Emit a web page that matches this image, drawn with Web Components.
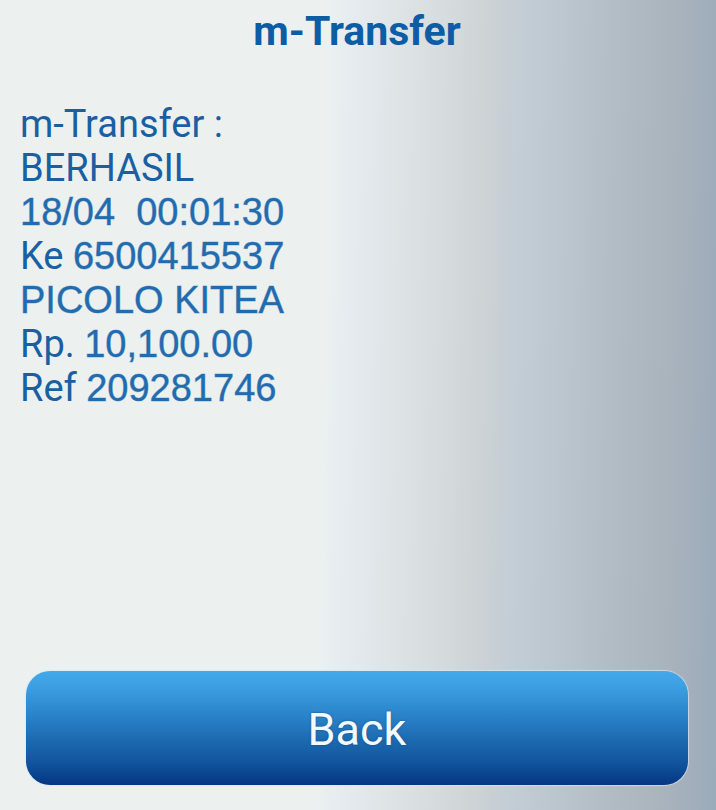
<!DOCTYPE html>
<html lang="id">
<head>
<meta charset="utf-8">
<meta name="viewport" content="width=device-width, initial-scale=1">
<title>m-Transfer</title>
<style>
  html, body { margin: 0; min-height: 100%; }
</style>
</head>
<body>
<transfer-screen>
  <screen-title slot="title">m-Transfer</screen-title>
  <receipt-line>m-Transfer :</receipt-line>
  <receipt-line>BERHASIL</receipt-line>
  <receipt-line><span slot="value">18/04&nbsp; 00:01:30</span></receipt-line>
  <receipt-line>Ke <span slot="value">6500415537</span></receipt-line>
  <receipt-line><span slot="value">PICOLO KITEA</span></receipt-line>
  <receipt-line>Rp. <span slot="value">10,100.00</span></receipt-line>
  <receipt-line>Ref <span slot="value">209281746</span></receipt-line>
  <action-button slot="action">Back</action-button>
</transfer-screen>
<script>
class BaseElement extends HTMLElement {
  constructor() {
    super();
    this.attachShadow({ mode: 'open' }).innerHTML = this.constructor.markup;
  }
}

class TransferScreen extends BaseElement {
  static markup = `
    <style>
      :host {
        display: flex;
        flex-direction: column;
        box-sizing: border-box;
        min-height: 100vh;
        padding: 7px 28px 25px 26px;
        font-family: Roboto, "Liberation Sans", sans-serif;
        color: #1a5fa2;
        background: linear-gradient(91deg,
          #ecf1f0 0%, #ecf1f0 45%, #e6ecf0 48%, #dde2e5 56%,
          #d5dadc 62%, #cbd1d4 68%, #c4ced6 71%, #bdc7d0 77%,
          #b2bcc5 85%, #a9b3bc 93%, #a3afbc 96%, #9aabb9 100%);
      }
      main { flex: 1; margin: 0 -6px; padding-top: 47px; }
    </style>
    <slot name="title"></slot>
    <main><slot></slot></main>
    <slot name="action"></slot>`;
}

class ScreenTitle extends BaseElement {
  static markup = `
    <style>
      :host { display: block; text-align: center; color: #0c5ca6; }
      h1 { margin: 0; font-size: 41px; line-height: 48px; font-weight: 700; }
    </style>
    <h1><slot></slot></h1>`;
}

class ReceiptLine extends BaseElement {
  static markup = `
    <style>
      :host { display: block; font-size: 38px; line-height: 44px; height: 44px; white-space: nowrap; }
      ::slotted(span) {
        font-family: "Liberation Sans", Arial, sans-serif;
        color: #226bae;
        -webkit-text-stroke: 1px rgba(34, 107, 174, 0.4);
      }
    </style>
    <slot></slot><slot name="value"></slot>`;
}

class ActionButton extends BaseElement {
  static markup = `
    <style>
      :host { display: block; }
      button {
        display: block;
        width: 100%;
        height: 114px;
        padding: 4px 0 0;
        border: 0;
        border-radius: 24px;
        font: 400 45px/54px Roboto, "Liberation Sans", sans-serif;
        color: #f3faff;
        background: linear-gradient(#43a9e9 0%, #3c9fe2 14%, #2b84cb 38%, #1c68ae 62%, #12559f 80%, #073a86 97%, #083780 100%);
        box-shadow: 0 0 1px 1px rgba(217, 233, 244, 0.7);
        text-shadow: 0 0 2px #1a4a7c;
        cursor: pointer;
      }
    </style>
    <button type="button"><slot></slot></button>`;
}

customElements.define('transfer-screen', TransferScreen);
customElements.define('screen-title', ScreenTitle);
customElements.define('receipt-line', ReceiptLine);
customElements.define('action-button', ActionButton);
</script>
</body>
</html>
